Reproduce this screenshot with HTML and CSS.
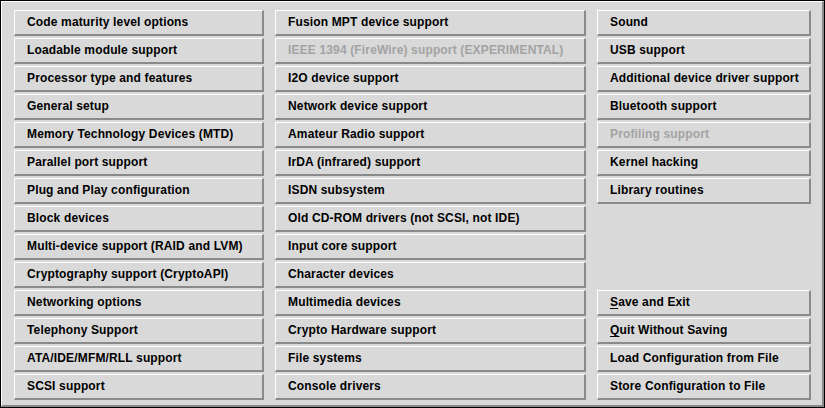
FILE: index.html
```html
<!DOCTYPE html>
<html lang="en">
<head>
  <meta charset="UTF-8" />
  <title>Linux Kernel Configuration</title>
  <link rel="stylesheet" href="styles.css">
</head>
<body>
  <div class="window">
    <div class="panel">

      <!-- first column -->
      <div class="column col-left">
        <button class="menu-btn">Code maturity level options</button>
        <button class="menu-btn">Loadable module support</button>
        <button class="menu-btn">Processor type and features</button>
        <button class="menu-btn">General setup</button>
        <button class="menu-btn">Memory Technology Devices (MTD)</button>
        <button class="menu-btn">Parallel port support</button>
        <button class="menu-btn">Plug and Play configuration</button>
        <button class="menu-btn">Block devices</button>
        <button class="menu-btn">Multi-device support (RAID and LVM)</button>
        <button class="menu-btn">Cryptography support (CryptoAPI)</button>
        <button class="menu-btn">Networking options</button>
        <button class="menu-btn">Telephony Support</button>
        <button class="menu-btn">ATA/IDE/MFM/RLL support</button>
        <button class="menu-btn">SCSI support</button>
      </div>

      <!-- second column -->
      <div class="column col-mid">
        <button class="menu-btn">Fusion MPT device support</button>
        <button class="menu-btn disabled">IEEE 1394 (FireWire) support (EXPERIMENTAL)</button>
        <button class="menu-btn">I2O device support</button>
        <button class="menu-btn">Network device support</button>
        <button class="menu-btn">Amateur Radio support</button>
        <button class="menu-btn">IrDA (infrared) support</button>
        <button class="menu-btn">ISDN subsystem</button>
        <button class="menu-btn">Old CD-ROM drivers (not SCSI, not IDE)</button>
        <button class="menu-btn">Input core support</button>
        <button class="menu-btn">Character devices</button>
        <button class="menu-btn">Multimedia devices</button>
        <button class="menu-btn">Crypto Hardware support</button>
        <button class="menu-btn">File systems</button>
        <button class="menu-btn">Console drivers</button>
      </div>

      <!-- third column, actions packed at the bottom -->
      <div class="column col-right">
        <button class="menu-btn">Sound</button>
        <button class="menu-btn">USB support</button>
        <button class="menu-btn">Additional device driver support</button>
        <button class="menu-btn">Bluetooth support</button>
        <button class="menu-btn disabled">Profiling support</button>
        <button class="menu-btn">Kernel hacking</button>
        <button class="menu-btn">Library routines</button>
        <div class="spacer"></div>
        <button class="menu-btn"><u>S</u>ave and Exit</button>
        <button class="menu-btn"><u>Q</u>uit Without Saving</button>
        <button class="menu-btn">Load Configuration from File</button>
        <button class="menu-btn">Store Configuration to File</button>
      </div>

    </div>
  </div>
</body>
</html>
```

FILE: styles.css
```css
body {
  margin: 0;
  background-color: #d9d9d9;
  font-family: 'Liberation Sans', Arial, sans-serif;
}

.window {
  width: 825px;
  height: 408px;
  box-sizing: border-box;
  border: 1px solid #000;
}

.panel {
  height: 100%;
  box-sizing: border-box;
  display: flex;
  gap: 11px;
  padding: 8px 11px 5px 12px;
  border-top: 1px solid #fff;
  border-left: 1px solid #fff;
  border-right: 2px solid #8a8a8a;
  border-bottom: 2px solid #8a8a8a;
  background-color: #d9d9d9;
}

.column {
  display: flex;
  flex-direction: column;
  flex-shrink: 0;
  gap: 2px;
}

.col-left {
  width: 250px;
}

.col-mid {
  width: 311px;
}

.col-right {
  width: 214px;
}

.spacer {
  flex: 1;
}

.menu-btn {
  flex-shrink: 0;
  height: 26px;
  margin: 0;
  padding: 0 0 1px 12px;
  box-sizing: border-box;
  text-align: left;
  font-family: inherit;
  font-size: 12px;
  font-weight: bold;
  letter-spacing: 0.15px;
  color: #000;
  background-color: #d9d9d9;
  border-top: 1px solid #fff;
  border-left: 1px solid #fff;
  border-right: 2px solid #8a8a8a;
  border-bottom: 2px solid #8a8a8a;
  border-radius: 0;
  white-space: nowrap;
  cursor: pointer;
}

.menu-btn.disabled {
  color: #a3a3a3;
}

.menu-btn u {
  text-decoration: underline;
  text-underline-offset: 2px;
}
```
